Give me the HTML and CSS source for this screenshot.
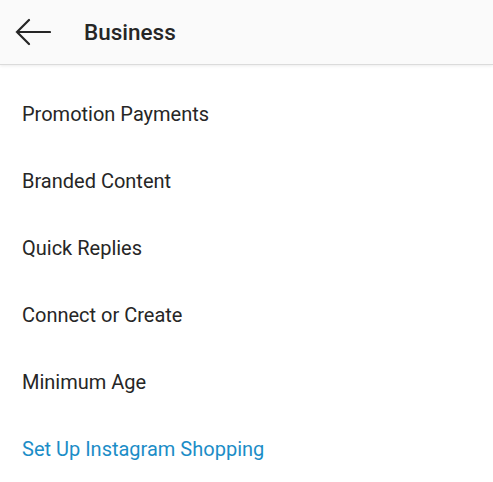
FILE: index.html
```html
<!DOCTYPE html>
<html lang="en">
<head>
  <meta charset="UTF-8">
  <title>Business</title>
  <link rel="stylesheet" href="styles.css">
</head>
<body>

  <div class="top-bar">
    <button class="back-btn" aria-label="Back">
      <svg width="36" height="28" viewBox="0 0 36 28">
        <path d="M14 2 L2 14 L14 26 M2 14 H35" fill="none" stroke="#262626" stroke-width="2.2" stroke-linecap="round" stroke-linejoin="miter"/>
      </svg>
    </button>
    <h1>Business</h1>
  </div>

  <ul class="menu">
    <li>Promotion Payments</li>
    <li>Branded Content</li>
    <li>Quick Replies</li>
    <li>Connect or Create</li>
    <li>Minimum Age</li>
    <li class="link">Set Up Instagram Shopping</li>
  </ul>

</body>
</html>
```

FILE: styles.css
```css
body {
  margin: 0;
  font-family: Roboto, "Noto Sans", sans-serif;
  background: #fff;
  color: #262626;
}

.top-bar {
  height: 64px;
  background: #fafafa;
  display: flex;
  align-items: center;
  border-bottom: 1px solid #dbdbdb;
  box-shadow: 0 1px 3px rgba(0,0,0,0.08);
}

.back-btn {
  background: none;
  border: none;
  padding: 0;
  margin-left: 15px;
  width: 36px;
  height: 28px;
  display: flex;
}

.top-bar h1 {
  margin: 0 0 0 33px;
  font-size: 22.5px;
  font-weight: 500;
  color: #262626;
}

.menu {
  list-style: none;
  margin: 0;
  padding: 15px 0 0 0;
}

.menu li {
  height: 67px;
  display: flex;
  align-items: center;
  padding-left: 22px;
  font-size: 20px;
}

.menu li.link {
  color: #1c8dc7;
}
```
